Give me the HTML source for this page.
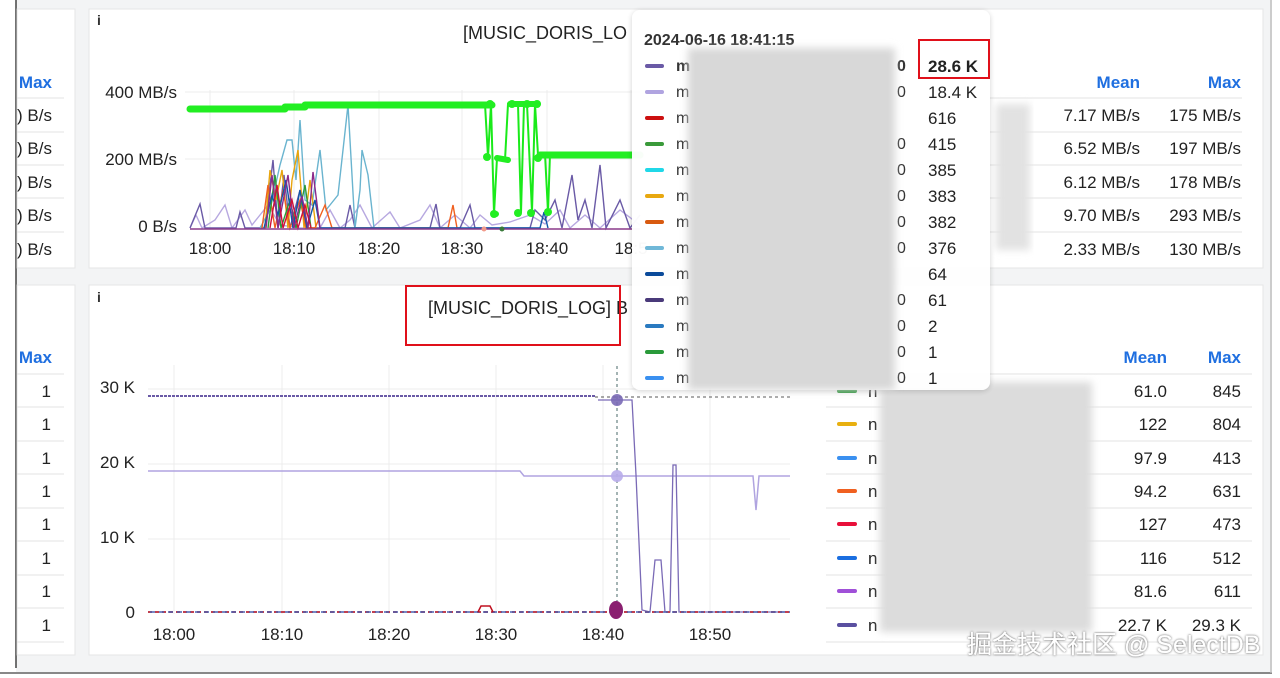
<!DOCTYPE html>
<html><head><meta charset="utf-8"><style>
html,body{margin:0;padding:0;background:#fff;width:1280px;height:678px;overflow:hidden}
text{font-family:"Liberation Sans",Arial,sans-serif}
</style></head><body>
<svg width="1280" height="678" viewBox="0 0 1280 678" xmlns="http://www.w3.org/2000/svg">
<defs>
<filter id="bl" x="-10%" y="-10%" width="120%" height="120%"><feGaussianBlur stdDeviation="4"/></filter>
<filter id="sh" x="-10%" y="-10%" width="120%" height="120%"><feDropShadow dx="0" dy="1" stdDeviation="3" flood-color="#000" flood-opacity="0.18"/></filter>
<filter id="ts"><feDropShadow dx="0" dy="0" stdDeviation="1" flood-color="#444" flood-opacity="1"/></filter>
</defs>
<rect x="0" y="0" width="1280" height="678" fill="#fff"/>
<rect x="16" y="0" width="1254" height="672" fill="#f3f4f5"/>
<line x1="16" y1="0" x2="16" y2="668" stroke="#444" stroke-width="1.5"/>
<line x1="0" y1="673" x2="1272" y2="673" stroke="#888" stroke-width="2"/>
<line x1="1271" y1="0" x2="1271" y2="673" stroke="#bbb" stroke-width="1.5"/>

<!-- left panels -->
<rect x="17" y="9" width="58" height="259" fill="#fff" stroke="#e6e6e6"/>
<rect x="17" y="285" width="58" height="370" fill="#fff" stroke="#e6e6e6"/>
<text x="52" y="88" font-size="17" font-weight="bold" fill="#1f6fe0" text-anchor="end">Max</text>
<g font-size="17" fill="#222" text-anchor="end">
<text x="52" y="121">) B/s</text><text x="52" y="154">) B/s</text><text x="52" y="188">) B/s</text><text x="52" y="221">) B/s</text><text x="52" y="255">) B/s</text>
</g>
<g stroke="#e3e3e3"><line x1="17" y1="98" x2="64" y2="98"/><line x1="17" y1="132" x2="64" y2="132"/><line x1="17" y1="165" x2="64" y2="165"/><line x1="17" y1="198" x2="64" y2="198"/><line x1="17" y1="232" x2="64" y2="232"/></g>
<text x="52" y="363" font-size="17" font-weight="bold" fill="#1f6fe0" text-anchor="end">Max</text>
<g font-size="17" fill="#222" text-anchor="end">
<text x="51" y="397">1</text><text x="51" y="430">1</text><text x="51" y="464">1</text><text x="51" y="497">1</text><text x="51" y="530">1</text><text x="51" y="564">1</text><text x="51" y="597">1</text><text x="51" y="631">1</text>
</g>
<g stroke="#e3e3e3"><line x1="17" y1="374" x2="64" y2="374"/><line x1="17" y1="407" x2="64" y2="407"/><line x1="17" y1="441" x2="64" y2="441"/><line x1="17" y1="474" x2="64" y2="474"/><line x1="17" y1="508" x2="64" y2="508"/><line x1="17" y1="541" x2="64" y2="541"/><line x1="17" y1="575" x2="64" y2="575"/><line x1="17" y1="608" x2="64" y2="608"/><line x1="17" y1="642" x2="64" y2="642"/></g>

<!-- main panels -->
<rect x="89" y="9" width="1174" height="259" fill="#fff" stroke="#e6e6e6"/>
<rect x="89" y="285" width="1174" height="370" fill="#fff" stroke="#e6e6e6"/>
<text x="97" y="25" font-size="14" font-weight="bold" fill="#333" font-family="Liberation Serif">i</text>
<text x="97" y="302" font-size="14" font-weight="bold" fill="#333" font-family="Liberation Serif">i</text>
<text x="463" y="39" font-size="18" fill="#222">[MUSIC_DORIS_LO</text>

<!-- top chart -->
<g stroke="#ececec"><line x1="185" y1="92" x2="640" y2="92"/><line x1="185" y1="159" x2="640" y2="159"/><line x1="210" y1="90" x2="210" y2="230"/><line x1="294" y1="90" x2="294" y2="230"/><line x1="379" y1="90" x2="379" y2="230"/><line x1="462" y1="90" x2="462" y2="230"/><line x1="547" y1="90" x2="547" y2="230"/><line x1="631" y1="90" x2="631" y2="230"/></g>
<g font-size="17" fill="#222" text-anchor="end"><text x="177" y="98">400 MB/s</text><text x="177" y="165">200 MB/s</text><text x="177" y="232">0 B/s</text></g>
<g font-size="17" fill="#222" text-anchor="middle"><text x="210" y="254">18:00</text><text x="294" y="254">18:10</text><text x="379" y="254">18:20</text><text x="462" y="254">18:30</text><text x="547" y="254">18:40</text><text x="631" y="254">18:5</text></g>
<g fill="none" stroke-width="1.4">
<polyline stroke="#b7a8e0" points="190,228 196,215 202,228 215,220 225,205 232,228 245,210 252,225 260,215 268,205 280,225 300,228 320,228 330,210 340,228 350,220 360,205 372,228 390,212 400,228 420,220 430,205 440,228 455,215 470,228 480,215 492,225 510,222 530,215 545,224 560,210 570,228 585,215 600,228 620,210 640,225"/>
<polyline stroke="#6a5aa6" points="190,228 200,204 205,228 236,228 240,212 245,228 265,228 273,160 278,228 284,175 290,228 300,190 306,228 320,228 330,228 345,228 350,205 355,228 430,228 436,204 440,228 460,228 470,205 475,228 530,228 535,210 545,220 555,200 562,228 572,175 578,220 585,200 592,228 600,165 606,228 620,200 630,228 640,215"/>
<polyline stroke="#6ab4cf" points="260,228 270,210 280,165 287,140 292,140 296,180 300,120 305,200 312,205 320,150 326,210 338,195 348,105 355,228 360,190 362,150 368,175 374,228"/>
<polyline stroke="#e8a40c" points="265,228 270,170 276,200 282,170 288,228 292,180 298,150 304,228 310,180 316,228"/>
<polyline stroke="#f06020" points="262,228 268,185 275,228 283,190 290,228 300,200 306,228 315,228 325,205 332,228 448,228 453,205 457,228"/>
<polyline stroke="#2b9a3a" points="268,228 275,175 281,228 290,200 296,228 305,185 311,228"/>
<polyline stroke="#1057a8" points="264,228 272,195 278,215 286,180 293,228 300,190 307,228 315,200 320,228 540,228 544,212 548,228"/>
<polyline stroke="#8b2a8a" points="266,228 272,175 278,228 288,175 294,228 302,196 308,228 313,172 320,228"/>
<polyline stroke="#d0103a" points="270,228 277,185 283,228 292,200 298,228 305,205 311,228"/>
</g>
<line x1="190" y1="229" x2="640" y2="229" stroke="#8a3a8a" stroke-width="1.5"/>
<circle cx="484" cy="229" r="2.5" fill="#f29a8a"/><circle cx="502" cy="229" r="2.5" fill="#3a7a3a"/>
<polyline fill="none" stroke="#1aea1a" stroke-width="2" points="485,104 488,157 491,104 494,214 497,158 505,160 508,104 511,104 518,104 521,213 524,104 527,104 532,212 535,104 538,155 545,154 548,212 550,154 640,154"/>
<g stroke="#22ee22" stroke-linecap="round" fill="none">
<line x1="190" y1="109" x2="285" y2="109" stroke-width="7"/>
<line x1="285" y1="107" x2="305" y2="107" stroke-width="7"/>
<line x1="305" y1="105" x2="492" y2="105" stroke-width="7"/>
<line x1="510" y1="104" x2="538" y2="104" stroke-width="6"/>
<line x1="540" y1="155" x2="640" y2="155" stroke-width="7"/>
<line x1="497" y1="158" x2="508" y2="160" stroke-width="6"/>
</g>
<g fill="#22ee22"><circle cx="487" cy="157" r="4"/><circle cx="494" cy="214" r="4"/><circle cx="496" cy="214" r="3"/><circle cx="518" cy="213" r="4"/><circle cx="531" cy="213" r="4"/><circle cx="548" cy="212" r="4"/><circle cx="538" cy="158" r="4"/><circle cx="490" cy="104" r="4"/><circle cx="527" cy="104" r="4"/><circle cx="537" cy="104" r="4"/><circle cx="512" cy="104" r="4"/></g>

<!-- top legend right -->
<text x="1140" y="88" font-size="17" font-weight="bold" fill="#1f6fe0" text-anchor="end">Mean</text>
<text x="1241" y="88" font-size="17" font-weight="bold" fill="#1f6fe0" text-anchor="end">Max</text>
<g stroke="#e3e3e3"><line x1="990" y1="98" x2="1242" y2="98"/><line x1="990" y1="132" x2="1242" y2="132"/><line x1="990" y1="165" x2="1242" y2="165"/><line x1="990" y1="198" x2="1242" y2="198"/><line x1="990" y1="232" x2="1242" y2="232"/></g>
<rect x="996" y="104" width="34" height="146" fill="#e2e2e2" filter="url(#bl)"/>
<g font-size="17" fill="#222" text-anchor="end">
<text x="1140" y="121">7.17 MB/s</text><text x="1241" y="121">175 MB/s</text>
<text x="1140" y="154">6.52 MB/s</text><text x="1241" y="154">197 MB/s</text>
<text x="1140" y="188">6.12 MB/s</text><text x="1241" y="188">178 MB/s</text>
<text x="1140" y="221">9.70 MB/s</text><text x="1241" y="221">293 MB/s</text>
<text x="1140" y="255">2.33 MB/s</text><text x="1241" y="255">130 MB/s</text>
</g>

<!-- bottom chart -->
<text x="428" y="314" font-size="18" fill="#222">[MUSIC_DORIS_LOG] B</text>
<rect x="406" y="286" width="214" height="59" fill="none" stroke="#e0101a" stroke-width="2"/>
<g stroke="#ececec"><line x1="148" y1="389" x2="790" y2="389"/><line x1="148" y1="464" x2="790" y2="464"/><line x1="148" y1="539" x2="790" y2="539"/><line x1="174" y1="365" x2="174" y2="614"/><line x1="282" y1="365" x2="282" y2="614"/><line x1="389" y1="365" x2="389" y2="614"/><line x1="496" y1="365" x2="496" y2="614"/><line x1="603" y1="365" x2="603" y2="614"/><line x1="710" y1="365" x2="710" y2="614"/></g>
<g font-size="17" fill="#222" text-anchor="end"><text x="135" y="393">30 K</text><text x="135" y="468">20 K</text><text x="135" y="543">10 K</text><text x="135" y="618">0</text></g>
<g font-size="17" fill="#222" text-anchor="middle"><text x="174" y="640">18:00</text><text x="282" y="640">18:10</text><text x="389" y="640">18:20</text><text x="496" y="640">18:30</text><text x="603" y="640">18:40</text><text x="710" y="640">18:50</text></g>
<line x1="148" y1="396" x2="595" y2="396" stroke="#6a5aa6" stroke-width="2" stroke-dasharray="3,1"/>
<line x1="595" y1="397" x2="790" y2="397" stroke="#555" stroke-dasharray="3,3"/>
<line x1="617" y1="366" x2="617" y2="612" stroke="#4a6a6a" stroke-dasharray="3,3"/>
<polyline fill="none" stroke="#b0a4e0" stroke-width="1.5" points="148,471 520,471 524,476 750,476 753,476 756,510 759,476 790,476"/>
<polyline fill="none" stroke="#7a6ab6" stroke-width="1.3" points="598,400 632,400 636,475 642,610 650,612 655,560 661,560 665,612 670,612 673,465 676,465 679,612 790,612"/>
<line x1="148" y1="612" x2="790" y2="612" stroke="#c04050" stroke-width="2" stroke-dasharray="4,3"/>
<line x1="150" y1="612" x2="790" y2="612" stroke="#4a60b0" stroke-width="1.5" stroke-dasharray="5,4"/>
<polyline fill="none" stroke="#c01020" stroke-width="1.5" points="478,612 481,606 490,606 493,612"/>
<circle cx="617" cy="400" r="6" fill="#7a6ab6" opacity="0.9"/>
<circle cx="617" cy="476" r="6" fill="#b8acea" opacity="0.9"/>
<ellipse cx="616" cy="610" rx="7" ry="9" fill="#8a2070"/>

<!-- bottom legend -->
<text x="1167" y="363" font-size="17" font-weight="bold" fill="#1f6fe0" text-anchor="end">Mean</text>
<text x="1241" y="363" font-size="17" font-weight="bold" fill="#1f6fe0" text-anchor="end">Max</text>
<g stroke="#e3e3e3"><line x1="826" y1="374" x2="1252" y2="374"/><line x1="826" y1="407" x2="1252" y2="407"/><line x1="826" y1="441" x2="1252" y2="441"/><line x1="826" y1="474" x2="1252" y2="474"/><line x1="826" y1="508" x2="1252" y2="508"/><line x1="826" y1="541" x2="1252" y2="541"/><line x1="826" y1="575" x2="1252" y2="575"/><line x1="826" y1="608" x2="1252" y2="608"/><line x1="826" y1="642" x2="1252" y2="642"/></g>
<g stroke-width="4" stroke-linecap="round">
<line x1="839" y1="391" x2="855" y2="391" stroke="#2b9a3a"/><line x1="839" y1="424" x2="855" y2="424" stroke="#e8b010"/><line x1="839" y1="458" x2="855" y2="458" stroke="#3a90f0"/><line x1="839" y1="491" x2="855" y2="491" stroke="#f06020"/><line x1="839" y1="524" x2="855" y2="524" stroke="#e8103a"/><line x1="839" y1="558" x2="855" y2="558" stroke="#1a6ee0"/><line x1="839" y1="591" x2="855" y2="591" stroke="#a050d8"/><line x1="839" y1="625" x2="855" y2="625" stroke="#5a50a0"/>
</g>
<g font-size="17" fill="#222"><text x="868" y="397">n</text><text x="868" y="430">n</text><text x="868" y="464">n</text><text x="868" y="497">n</text><text x="868" y="530">n</text><text x="868" y="564">n</text><text x="868" y="597">n</text><text x="868" y="631">n</text></g>
<rect x="880" y="382" width="212" height="250" fill="#dcdcdc" filter="url(#bl)"/>
<g font-size="17" fill="#222" text-anchor="end">
<text x="1167" y="397">61.0</text><text x="1241" y="397">845</text>
<text x="1167" y="430">122</text><text x="1241" y="430">804</text>
<text x="1167" y="464">97.9</text><text x="1241" y="464">413</text>
<text x="1167" y="497">94.2</text><text x="1241" y="497">631</text>
<text x="1167" y="530">127</text><text x="1241" y="530">473</text>
<text x="1167" y="564">116</text><text x="1241" y="564">512</text>
<text x="1167" y="597">81.6</text><text x="1241" y="597">611</text>
<text x="1167" y="631">22.7 K</text><text x="1241" y="631">29.3 K</text>
</g>

<!-- tooltip -->
<rect x="632" y="10" width="358" height="380" rx="8" fill="#fff" opacity="0.97" filter="url(#sh)"/>
<text x="644" y="45" font-size="16" font-weight="bold" fill="#333">2024-06-16 18:41:15</text>
<g stroke-width="4" stroke-linecap="round">
<line x1="647" y1="66" x2="662" y2="66" stroke="#6a5aa6"/><line x1="647" y1="92" x2="662" y2="92" stroke="#b0a4e0"/><line x1="647" y1="118" x2="662" y2="118" stroke="#cc1010"/><line x1="647" y1="144" x2="662" y2="144" stroke="#3a9a3a"/><line x1="647" y1="170" x2="662" y2="170" stroke="#20d8e8"/><line x1="647" y1="196" x2="662" y2="196" stroke="#e8a810"/><line x1="647" y1="222" x2="662" y2="222" stroke="#d85a10"/><line x1="647" y1="248" x2="662" y2="248" stroke="#70b8d8"/><line x1="647" y1="274" x2="662" y2="274" stroke="#0a4a9a"/><line x1="647" y1="300" x2="662" y2="300" stroke="#4a3a7a"/><line x1="647" y1="326" x2="662" y2="326" stroke="#2a7ac0"/><line x1="647" y1="352" x2="662" y2="352" stroke="#2a9a3a"/><line x1="647" y1="378" x2="662" y2="378" stroke="#3a90f0"/>
</g>
<g font-size="16" fill="#333"><text x="676" y="71" font-weight="bold">m</text><text x="676" y="97">m</text><text x="676" y="123">m</text><text x="676" y="149">m</text><text x="676" y="175">m</text><text x="676" y="201">m</text><text x="676" y="227">m</text><text x="676" y="253">m</text><text x="676" y="279">m</text><text x="676" y="305">m</text><text x="676" y="331">m</text><text x="676" y="357">m</text><text x="676" y="383">m</text></g>
<g font-size="16" fill="#333"><text x="897" y="71" font-weight="bold">0</text><text x="897" y="97">0</text><text x="897" y="149">0</text><text x="897" y="175">0</text><text x="897" y="201">0</text><text x="897" y="227">0</text><text x="897" y="253">0</text><text x="897" y="305">0</text><text x="897" y="331">0</text><text x="897" y="357">0</text><text x="897" y="383">0</text></g>
<rect x="688" y="48" width="207" height="342" fill="#d8d8d8" filter="url(#bl)"/>
<g font-size="17" fill="#222">
<text x="928" y="72" font-weight="bold">28.6 K</text><text x="928" y="98">18.4 K</text><text x="928" y="124">616</text><text x="928" y="150">415</text><text x="928" y="176">385</text><text x="928" y="202">383</text><text x="928" y="228">382</text><text x="928" y="254">376</text><text x="928" y="280">64</text><text x="928" y="306">61</text><text x="928" y="332">2</text><text x="928" y="358">1</text><text x="928" y="384">1</text>
</g>
<rect x="919" y="40" width="70" height="38" fill="none" stroke="#e0101a" stroke-width="2"/>

<!-- watermark -->
<text x="967" y="653" font-size="25" fill="#fff" filter="url(#ts)" font-family="'Liberation Sans','Noto Sans CJK SC',sans-serif">掘金技术社区 @ SelectDB</text>
</svg>
</body></html>
